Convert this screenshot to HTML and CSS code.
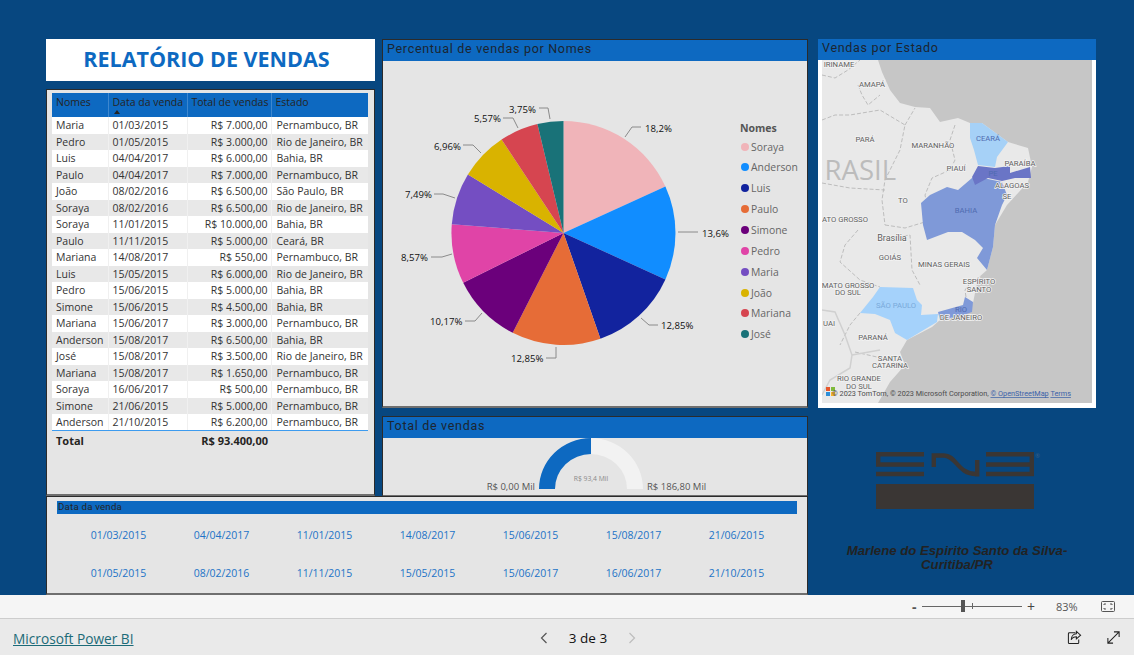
FILE: index.html
```html
<!DOCTYPE html>
<html lang="pt-BR">
<head>
<meta charset="utf-8">
<title>Relatório de Vendas</title>
<link rel="stylesheet" href="styles.css">
</head>
<body>
<div class="page">
  <main class="canvas">
    <div class="title-card"><h1>RELATÓRIO DE VENDAS</h1></div>

    <section class="panel table-panel">
      <table class="sales">
        <colgroup><col class="c1"><col class="c2"><col class="c3"><col class="c4"></colgroup>
        <thead>
          <tr><th>Nomes</th><th class="sorted">Data da venda<span class="sort-arrow"></span></th><th>Total de vendas</th><th>Estado</th></tr>
        </thead>
        <tbody>
          <tr><td>Maria</td><td>01/03/2015</td><td class="num">R$ 7.000,00</td><td>Pernambuco, BR</td></tr>
          <tr><td>Pedro</td><td>01/05/2015</td><td class="num">R$ 3.000,00</td><td>Rio de Janeiro, BR</td></tr>
          <tr><td>Luis</td><td>04/04/2017</td><td class="num">R$ 6.000,00</td><td>Bahia, BR</td></tr>
          <tr><td>Paulo</td><td>04/04/2017</td><td class="num">R$ 7.000,00</td><td>Pernambuco, BR</td></tr>
          <tr><td>João</td><td>08/02/2016</td><td class="num">R$ 6.500,00</td><td>São Paulo, BR</td></tr>
          <tr><td>Soraya</td><td>08/02/2016</td><td class="num">R$ 6.500,00</td><td>Rio de Janeiro, BR</td></tr>
          <tr><td>Soraya</td><td>11/01/2015</td><td class="num">R$ 10.000,00</td><td>Bahia, BR</td></tr>
          <tr><td>Paulo</td><td>11/11/2015</td><td class="num">R$ 5.000,00</td><td>Ceará, BR</td></tr>
          <tr><td>Mariana</td><td>14/08/2017</td><td class="num">R$ 550,00</td><td>Pernambuco, BR</td></tr>
          <tr><td>Luis</td><td>15/05/2015</td><td class="num">R$ 6.000,00</td><td>Rio de Janeiro, BR</td></tr>
          <tr><td>Pedro</td><td>15/06/2015</td><td class="num">R$ 5.000,00</td><td>Bahia, BR</td></tr>
          <tr><td>Simone</td><td>15/06/2015</td><td class="num">R$ 4.500,00</td><td>Bahia, BR</td></tr>
          <tr><td>Mariana</td><td>15/06/2017</td><td class="num">R$ 3.000,00</td><td>Pernambuco, BR</td></tr>
          <tr><td>Anderson</td><td>15/08/2017</td><td class="num">R$ 6.500,00</td><td>Bahia, BR</td></tr>
          <tr><td>José</td><td>15/08/2017</td><td class="num">R$ 3.500,00</td><td>Rio de Janeiro, BR</td></tr>
          <tr><td>Mariana</td><td>15/08/2017</td><td class="num">R$ 1.650,00</td><td>Pernambuco, BR</td></tr>
          <tr><td>Soraya</td><td>16/06/2017</td><td class="num">R$ 500,00</td><td>Pernambuco, BR</td></tr>
          <tr><td>Simone</td><td>21/06/2015</td><td class="num">R$ 5.000,00</td><td>Pernambuco, BR</td></tr>
          <tr><td>Anderson</td><td>21/10/2015</td><td class="num">R$ 6.200,00</td><td>Pernambuco, BR</td></tr>
        </tbody>
        <tfoot>
          <tr><td>Total</td><td></td><td class="num">R$ 93.400,00</td><td></td></tr>
        </tfoot>
      </table>
    </section>

    <section class="panel pie-panel">
      <h2 class="visual-title">Percentual de vendas por Nomes</h2>
      <svg class="chart pie-chart" viewBox="383 61 424 345" aria-label="Percentual de vendas por Nomes">
        <g transform="translate(563.5 233)">
          <path fill="#F0B4B9" d="M0 0V-112A112 112 0 0 1 101.9 -46.4Z"/>
          <path fill="#118DFF" d="M0 0L101.9 -46.4A112 112 0 0 1 101.9 46.4Z"/>
          <path fill="#12239E" d="M0 0L101.9 46.4A112 112 0 0 1 36.9 105.7Z"/>
          <path fill="#E66C37" d="M0 0L36.9 105.7A112 112 0 0 1 -50.8 99.8Z"/>
          <path fill="#6B007B" d="M0 0L-50.8 99.8A112 112 0 0 1 -100.3 49.8Z"/>
          <path fill="#E044A7" d="M0 0L-100.3 49.8A112 112 0 0 1 -111.7 -8.7Z"/>
          <path fill="#744EC2" d="M0 0L-111.7 -8.7A112 112 0 0 1 -95.6 -58.4Z"/>
          <path fill="#D9B300" d="M0 0L-95.6 -58.4A112 112 0 0 1 -61.9 -93.4Z"/>
          <path fill="#D64550" d="M0 0L-61.9 -93.4A112 112 0 0 1 -26.1 -108.9Z"/>
          <path fill="#197278" d="M0 0L-26.1 -108.9A112 112 0 0 1 0 -112Z"/>
        </g>
        <g class="leader">
          <polyline points="625,137 632,127 641,127"/>
          <polyline points="678,232 698,232"/>
          <polyline points="641,318 649,325 658,325"/>
          <polyline points="556,347 556,358 546,358"/>
          <polyline points="482,313 475,321 465,321"/>
          <polyline points="452,254 442,257 431,257"/>
          <polyline points="455,198 443,194 434,194"/>
          <polyline points="481,153 473,145 463,145"/>
          <polyline points="518,128 513,118 503,118"/>
          <polyline points="550,119 548,108 539,108"/>
        </g>
        <g class="pct">
          <text x="645" y="132">18,2%</text>
          <text x="702" y="237">13,6%</text>
          <text x="661" y="329">12,85%</text>
          <text x="511" y="362">12,85%</text>
          <text x="430" y="325">10,17%</text>
          <text x="401" y="261">8,57%</text>
          <text x="405" y="198">7,49%</text>
          <text x="434" y="150">6,96%</text>
          <text x="474" y="122">5,57%</text>
          <text x="509" y="113">3,75%</text>
        </g>
        <text class="legend-title" x="740" y="132">Nomes</text>
        <g class="legend">
          <circle cx="745" cy="147" r="4" fill="#F0B4B9"/><text x="751" y="151">Soraya</text>
          <circle cx="745" cy="167" r="4" fill="#118DFF"/><text x="751" y="171">Anderson</text>
          <circle cx="745" cy="188" r="4" fill="#12239E"/><text x="751" y="192">Luis</text>
          <circle cx="745" cy="209" r="4" fill="#E66C37"/><text x="751" y="213">Paulo</text>
          <circle cx="745" cy="230" r="4" fill="#6B007B"/><text x="751" y="234">Simone</text>
          <circle cx="745" cy="251" r="4" fill="#E044A7"/><text x="751" y="255">Pedro</text>
          <circle cx="745" cy="272" r="4" fill="#744EC2"/><text x="751" y="276">Maria</text>
          <circle cx="745" cy="293" r="4" fill="#D9B300"/><text x="751" y="297">João</text>
          <circle cx="745" cy="313" r="4" fill="#D64550"/><text x="751" y="317">Mariana</text>
          <circle cx="745" cy="334" r="4" fill="#197278"/><text x="751" y="338">José</text>
        </g>
      </svg>
    </section>

    <section class="map-panel">
      <h2 class="visual-title">Vendas por Estado</h2>
      <svg class="chart map" viewBox="822 60 270 343" aria-label="Mapa de vendas por estado">
        <rect x="822" y="60" width="270" height="343" fill="#C6C6C6"/>
        <polygon fill="#E9E9E9" points="878,60 882,72 890,90 900,103 915,107 930,108 940,122 958,118 970,123 982,123 1008,142 1028,148 1032,167 1028,182 1007,205 995,225 993,247 987,270 978,278 973,303 962,310 940,320 932,327 907,340 900,352 905,365 890,382 878,403 822,403 822,60"/>
        <g class="borders">
          <polyline points="822,75 835,78 848,70 860,60"/>
          <polyline points="858,85 862,95 868,105 880,95"/>
          <polyline points="822,120 835,115 850,115 880,110 905,125 900,150 885,180 882,200 885,225"/>
          <polyline points="905,125 915,108"/>
          <polyline points="955,125 950,140 955,160 950,170 932,178 925,195 927,205"/>
          <polyline points="822,183 850,188 885,190"/>
          <polyline points="885,225 905,228 925,222"/>
          <polyline points="858,230 845,245 840,262 860,280 880,287"/>
          <polyline points="880,240 910,235 912,270 920,285"/>
          <polyline points="974,278 965,290 966,297"/>
          <polyline points="860,313 850,325 840,345"/>
          <polyline points="855,352 890,360 905,365"/>
        </g>
        <g class="roads">
          <polyline points="822,310 835,312 845,335 852,355 850,368 830,380 822,395"/>
          <polyline points="852,355 880,350"/>
        </g>
        <polygon fill="#A6D1F7" points="970,123 982,123 1008,142 997,157 995,167 978,165 974,150 970,138"/>
        <polygon fill="#7F99D8" points="972,178 988,179 1002,182 1007,195 1002,205 995,225 993,247 987,270 977,258 983,248 975,240 962,232 948,232 927,240 923,225 921,203 930,195 947,187 958,190"/>
        <polygon fill="#6A75C6" points="978,166 995,168 1010,166 1010,173 1030,167 1031,178 1015,178 1002,181 988,178 975,185 972,177"/>
        <polygon fill="#A5D2FB" points="880,287 913,288 917,300 922,305 921,315 938,314 937,322 907,340 895,333 890,320 875,314 860,313 873,297"/>
        <polygon fill="#7F99D8" points="938,312 963,305 965,297 973,302 972,312 958,317 940,320"/>
        <text class="country" x="896" y="180">RASIL</text>
        <g class="place">
          <text x="839" y="67">IRINAME</text>
          <text x="872" y="87">AMAPÁ</text>
          <text x="865" y="142">PARÁ</text>
          <text x="933" y="148">MARANHÃO</text>
          <text class="on-state" x="988" y="141">CEARÁ</text>
          <text x="956" y="171">PIAUÍ</text>
          <text x="1020" y="166">PARAÍBA</text>
          <text class="on-state" x="993" y="176">PE</text>
          <text x="1012" y="188">ALAGOAS</text>
          <text x="1007" y="199">SE</text>
          <text x="903" y="203">TO</text>
          <text class="on-state" x="966" y="213">BAHIA</text>
          <text x="845" y="222">ATO GROSSO</text>
          <text class="city" x="892" y="241">Brasília</text>
          <text x="890" y="260">GOIÁS</text>
          <text x="944" y="267">MINAS GERAIS</text>
          <text x="979" y="284">ESPÍRITO</text>
          <text x="979" y="292">SANTO</text>
          <text x="848" y="288">MATO GROSSO</text>
          <text x="848" y="295">DO SUL</text>
          <text class="on-state light" x="896" y="308">SÃO PAULO</text>
          <text class="on-state" x="961" y="312">RIO</text>
          <text x="961" y="320">DE JANEIRO</text>
          <text x="829" y="326">UAI</text>
          <text x="873" y="340">PARANÁ</text>
          <text x="890" y="361">SANTA</text>
          <text x="890" y="368">CATARINA</text>
          <text x="859" y="381">RIO GRANDE</text>
          <text x="859" y="389">DO SUL</text>
        </g>
        <g class="ms-logo">
          <rect x="826" y="387" width="4" height="4" fill="#E8562A"/>
          <rect x="831" y="387" width="4" height="4" fill="#7FBA3C"/>
          <rect x="826" y="392" width="4" height="4" fill="#2E8FD8"/>
          <rect x="831" y="392" width="4" height="4" fill="#F2B62A"/>
        </g>
        <text class="attribution" x="832" y="396">© 2023 TomTom, © 2023 Microsoft Corporation, <tspan class="attr-link">© OpenStreetMap</tspan>  <tspan class="attr-link">Terms</tspan></text>
      </svg>
    </section>

    <section class="panel gauge-panel">
      <h2 class="visual-title">Total de vendas</h2>
      <svg class="chart gauge" viewBox="383 438 424 57" aria-label="Total de vendas">
        <path fill="#0D69C1" d="M539 489A52 51 0 0 1 591 438V454A36 35 0 0 0 555 489Z"/>
        <path fill="#F2F2F2" d="M591 438A52 51 0 0 1 643 489H627A36 35 0 0 0 591 454Z"/>
        <text class="gauge-mid" x="591" y="481">R$ 93,4 Mil</text>
        <text class="gauge-end" x="535" y="490" text-anchor="end">R$ 0,00 Mil</text>
        <text class="gauge-end" x="647" y="490">R$ 186,80 Mil</text>
      </svg>
    </section>

    <aside class="brand">
      <svg class="logo" viewBox="0 0 165 57" aria-label="ENS">
        <g class="logo-strokes">
          <path d="M48 2.2H2.2V12.5H48M0 22H48"/>
          <path d="M57.8 15V3.5H68C80 3.5 82 22 100 22H103M101.2 8V24.4"/>
          <path d="M110 2.2H155.8V22H110M110 12.5H155.8"/>
        </g>
        <text class="reg" x="159" y="6">®</text>
        <rect x="0" y="32" width="158" height="25" fill="#3A3634"/>
      </svg>
      <p class="credit">Marlene do Espirito Santo da Silva-<br>Curitiba/PR</p>
    </aside>

    <section class="panel slicer">
      <h3 class="slicer-title">Data da venda</h3>
      <ul class="dates">
        <li>01/03/2015</li><li>04/04/2017</li><li>11/01/2015</li><li>14/08/2017</li><li>15/06/2015</li><li>15/08/2017</li><li>21/06/2015</li>
        <li>01/05/2015</li><li>08/02/2016</li><li>11/11/2015</li><li>15/05/2015</li><li>15/06/2017</li><li>16/06/2017</li><li>21/10/2015</li>
      </ul>
    </section>
  </main>

  <div class="zoom-bar">
    <span class="zoom-sign">-</span>
    <span class="slider"><span class="thumb"></span><span class="tick"></span></span>
    <span class="zoom-sign plus">+</span>
    <span class="zoom-value">83%</span>
    <svg class="fit" viewBox="0 0 14 11"><rect x="0.5" y="0.5" width="13" height="10" rx="1"/><path d="M3 4V3H5M9 3H11V4M11 7V8H9M5 8H3V7"/></svg>
  </div>

  <footer class="footer">
    <a class="brand-link" href="#">Microsoft Power BI</a>
    <nav class="pager">
      <svg class="chev" viewBox="0 0 8 12"><path d="M6.5 1L1.5 6L6.5 11"/></svg>
      <span class="page-count">3 de 3</span>
      <svg class="chev off" viewBox="0 0 8 12"><path d="M1.5 1L6.5 6L1.5 11"/></svg>
    </nav>
    <div class="actions">
      <svg class="act" viewBox="0 0 16 16"><path d="M9 3H2.5A1 1 0 0 0 1.5 4V13.5A1 1 0 0 0 2.5 14.5H11.5A1 1 0 0 0 12.5 13.5V10"/><path d="M10 1.5L14.5 5.5L10 9.5V7.2C7.5 7.2 5.6 8.2 4.5 10.5C4.5 7 6.8 4.2 10 4Z"/></svg>
      <svg class="act" viewBox="0 0 16 16"><path d="M2 14L14 2M8.5 2H14V7.5M2 8.5V14H7.5"/></svg>
    </div>
  </footer>
</div>
</body>
</html>
```
FILE: styles.css
```css
* { box-sizing: border-box; }
html, body { margin: 0; padding: 0; }
body { overflow: hidden; background: #074780; font-family: "Open Sans", "Noto Sans", sans-serif; }
.page { width: 1134px; height: 655px; display: flex; flex-direction: column; }

.canvas {
  height: 595px;
  flex: none;
  background: #074780;
  padding: 40px 0 0 46px;
  display: grid;
  grid-template-columns: 329px 7px 426px 10px 278px;
  grid-template-rows: 41px 9px 317px 10px 79px 99px;
}

.title-card {
  grid-column: 1; grid-row: 1;
  margin-top: -1px;
  padding: 0 8px 3px 0;
  background: #fff;
  display: flex; align-items: center; justify-content: center;
}
.title-card h1 { margin: 0; font-size: 21.5px; font-weight: 700; color: #0D69C1; letter-spacing: 0; }

.panel { background: #E5E5E5; border: 1px solid #2b2b2b; border-bottom: 2px solid #6f6f6f; }

.visual-title {
  margin: 0; height: 21px; padding: 0 4px;
  background: #0D69C1; color: #1c2530;
  font-family: Roboto, sans-serif; font-size: 12.5px; font-weight: 400; line-height: 18px; letter-spacing: 0.7px;
  flex: none;
}

.table-panel { grid-column: 1; grid-row: 3 / span 3; margin-top: -1px; padding: 3px 6px 0 5px; }
.sales { border-collapse: collapse; table-layout: fixed; width: 316px; font-size: 10.5px; color: #333; }
.c1 { width: 56px; } .c2 { width: 79px; } .c3 { width: 84px; } .c4 { width: 97px; }
.sales th {
  background: #0D69C1; color: #252423; font-weight: 400; text-align: left; vertical-align: top;
  height: 24px; padding: 2px 4px 0; white-space: nowrap; line-height: 14px;
  border-left: 1px solid #3d87cf; position: relative;
}
.sales th:first-child { border-left: 0; }
.sort-arrow {
  position: absolute; left: 5px; top: 17px; width: 0; height: 0;
  border: 3.5px solid transparent; border-top: 0; border-bottom: 4px solid #252423;
}
.sales td {
  height: 16.5px; padding: 0 4px; white-space: nowrap; line-height: 14px; overflow: visible;
  border-left: 1px solid #f0f0f0;
}
.sales td:first-child { border-left: 0; }
.sales td:last-child { padding-left: 5px; }
.sales tbody tr:nth-child(odd) td { background: #fff; }
.sales tbody tr:nth-child(even) td { background: #E8E8E8; }
.sales .num { text-align: right; padding-right: 3px; }
.sales tbody tr:last-child td { border-bottom: 1.5px solid #3D9BEF; }
.sales tfoot td { font-weight: 700; font-size: 11px; border-left: 0; height: 20px; color: #252423; }

.pie-panel { grid-column: 3; grid-row: 1 / span 3; margin-top: -1px; margin-bottom: -1px; display: flex; flex-direction: column; }
.chart { display: block; flex: 1; min-height: 0; width: 100%; }
.leader polyline { fill: none; stroke: #8a8a8a; stroke-width: 1; }
.pct text { font-size: 9.6px; fill: #111; font-family: "Open Sans", sans-serif; }
.legend-title { font-size: 10.5px; font-weight: 700; fill: #555; }
.legend text { font-size: 10.4px; fill: #666; }

.map-panel {
  grid-column: 5; grid-row: 1 / span 3;
  margin-top: -1px; margin-bottom: -1px;
  background: #fff; display: flex; flex-direction: column; padding-bottom: 5px;
}
.map-panel .map { width: 270px; margin: 0 4px; height: 343px; flex: none; }
.borders polyline { fill: none; stroke: #BDBDBD; stroke-width: 1; stroke-dasharray: 4 2; }
.roads polyline { fill: none; stroke: #D0D0D0; stroke-width: 1.5; }
.country { font-family: "Open Sans", sans-serif; font-size: 27.5px; fill: #BCBCBC; text-anchor: end; }
.place text { font-size: 7.7px; fill: #5E5E5E; text-anchor: middle; font-family: Roboto, sans-serif; paint-order: stroke; stroke: #F3F3F3; stroke-width: 1.5px; }
.place text.city { font-size: 9px; }
.place text.on-state { fill: #4F6BB0; stroke: none; }
.place text.light { fill: #79A9DA; }
.attribution { font-size: 7.3px; fill: #4c4c4c; font-family: Roboto, sans-serif; }
.attr-link { fill: #3B62A8; text-decoration: underline; }

.gauge-panel { grid-column: 3; grid-row: 5; margin-top: -1px; margin-bottom: -1px; display: flex; flex-direction: column; }
.gauge-mid { font-size: 6.8px; fill: #8a8a8a; text-anchor: middle; }
.gauge-end { font-size: 9.5px; fill: #555; }

.brand { grid-column: 5; grid-row: 5 / span 2; display: flex; flex-direction: column; align-items: center; padding-top: 35px; }
.logo { width: 165px; height: 57px; margin-left: 3px; display: block; overflow: visible; flex: none; }
.logo-strokes path { fill: none; stroke: #3A3634; stroke-width: 4.4; }
.reg { font-size: 6px; fill: #3A5F85; }
.credit { margin: 35px 0 0; text-align: center; font: italic 700 13.2px/14px "Liberation Sans", sans-serif; color: #222; }

.slicer { grid-column: 1 / span 3; grid-row: 6; padding: 4px 10px 0; }
.slicer-title {
  margin: 0; height: 13px; background: #0D69C1; color: #252423;
  font-size: 9.7px; font-weight: 400; line-height: 12px; font-family: Roboto, sans-serif; letter-spacing: 0.2px;
  padding-left: 1px;
}
.dates {
  list-style: none; margin: 13px 0 0; padding: 0 0 0 10px;
  display: grid; grid-template-columns: repeat(7, 103px); grid-auto-rows: 38px;
  font-size: 10.5px; color: #2273C7;
  justify-content: start; text-align: center;
}
.dates li { line-height: 16px; }

.zoom-bar {
  height: 24px; flex: none; background: #F5F5F5; border-bottom: 1px solid #CDCDCD;
  display: flex; align-items: center; padding-left: 912px; color: #555;
}
.zoom-sign { font-size: 14px; font-weight: 700; width: 10px; line-height: 20px; }
.plus { font-weight: 400; margin-left: 5px; width: 14px; color: #444; }
.slider { width: 100px; height: 1px; background: #666; position: relative; display: block; }
.thumb { position: absolute; left: 39px; top: -6px; width: 4px; height: 12px; background: #555; }
.tick { position: absolute; left: 50px; top: -3px; width: 1px; height: 6px; background: #666; }
.zoom-value { font-size: 11px; margin-left: 15px; width: 45px; color: #555; }
.fit { width: 14px; height: 11px; fill: none; stroke: #555; stroke-width: 1; }

.footer { flex: 1; background: #EAEAEA; display: grid; grid-template-columns: 1fr 1fr 1fr; align-items: center; padding: 0 0 0 13px; }
.brand-link { color: #1C6B78; font-size: 13.7px; text-decoration: underline; font-family: "Open Sans", sans-serif; margin-top: 2px; }
.pager { display: flex; align-items: center; justify-content: center; gap: 21px; margin-left: 29px; margin-top: 1px; }
.page-count { font-size: 13.5px; font-weight: 500; color: #111; }
.chev { width: 8px; height: 12px; fill: none; stroke: #555; stroke-width: 1.2; }
.chev.off { stroke: #BDBDBD; }
.actions { display: flex; justify-content: flex-end; gap: 24px; padding-right: 13px; }
.act { width: 15px; height: 15px; fill: none; stroke: #222; stroke-width: 1.1; }
```
